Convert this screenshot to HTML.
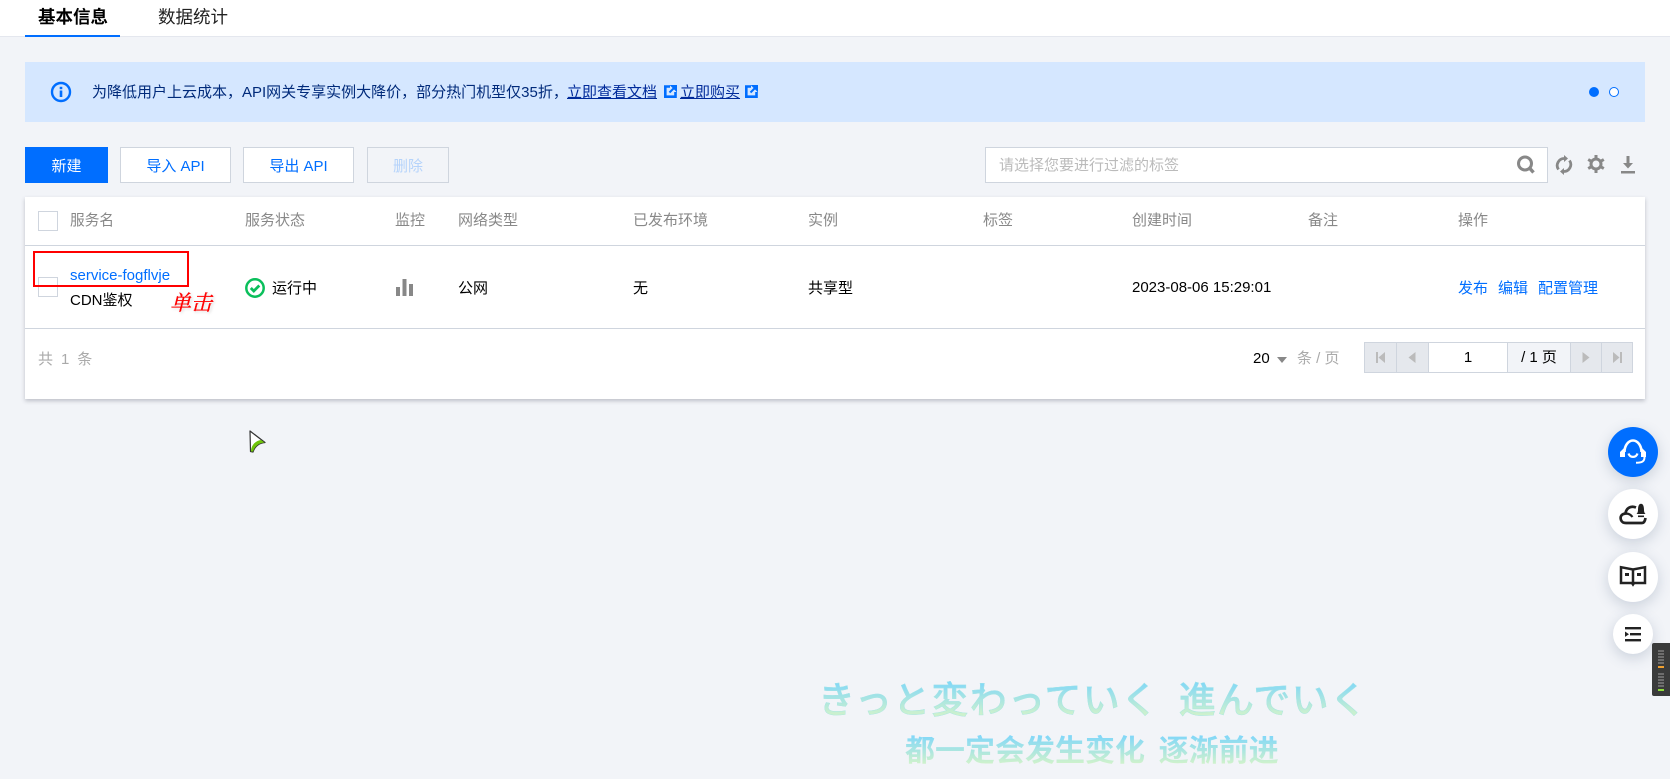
<!DOCTYPE html>
<html lang="zh-CN">
<head>
<meta charset="utf-8">
<title>API网关</title>
<style>
html,body{margin:0;padding:0}
body{width:1670px;height:779px;overflow:hidden;background:#f2f4f8;position:relative;font-family:"Liberation Sans","Noto Sans CJK SC",sans-serif;font-size:15px;color:#000}
.a{position:absolute}
.t{position:absolute;white-space:nowrap;line-height:20px;height:20px}
.g{color:#888}
.b{color:#006eff}
.btn{position:absolute;top:147px;height:36px;box-sizing:border-box;border:1px solid #cfd5de;background:#fff;color:#006eff;text-align:center;line-height:37px}
.cb{position:absolute;left:38px;width:20px;height:20px;box-sizing:border-box;border:1px solid #cfd5de;background:#fff}
.pg{position:absolute;top:342px;height:31px;box-sizing:border-box;border:1px solid #cfd5de;background:#e5e8ed}
.fab{position:absolute;border-radius:50%;background:#fff;box-shadow:0 4px 14px rgba(60,80,120,.22)}
.fab svg{position:absolute;left:0;top:0}
.grad{position:absolute;white-space:nowrap;color:transparent;background:linear-gradient(#7bd5fc 15%,#cdf1cd 85%);-webkit-background-clip:text;background-clip:text}
svg{display:block}
</style>
</head>
<body>
<!-- top tabs -->
<div class="a" style="left:0;top:0;width:1670px;height:36px;background:#fff;border-bottom:1px solid #e4e7ee"></div>
<div class="t" style="left:38px;top:7px;font-size:17.5px;font-weight:700;color:#000">基本信息</div>
<div class="t" style="left:158px;top:7px;font-size:17.5px;color:#222">数据统计</div>
<div class="a" style="left:25px;top:35px;width:95px;height:2px;background:#006eff"></div>

<!-- banner -->
<div class="a" style="left:25px;top:62px;width:1620px;height:60px;background:#d5e7ff"></div>
<svg class="a" style="left:50px;top:81px" width="22" height="22" viewBox="0 0 22 22"><circle cx="11" cy="11" r="9" fill="none" stroke="#006eff" stroke-width="2.400"/><rect x="9.700" y="9.500" width="2.600" height="6.500" fill="#006eff"/><rect x="9.700" y="5.800" width="2.600" height="2.400" fill="#006eff"/></svg>
<div class="t" style="left:92px;top:83px;color:#002a7a">为降低用户上云成本，API网关专享实例大降价，部分热门机型仅35折，</div>
<div class="t" style="left:567px;top:83px;color:#002a9a;text-decoration:underline">立即查看文档</div>
<svg class="a" style="left:664px;top:85px" width="13" height="13" viewBox="0 0 13 13"><path d="M6 1.500H1.300v10.200h10.200V7" fill="none" stroke="#006eff" stroke-width="2.600"/><path d="M7 0h6v6zM10.500 2.500L5.500 7.500" fill="#006eff" stroke="#006eff" stroke-width="2"/></svg>
<div class="t" style="left:680px;top:83px;color:#002a9a;text-decoration:underline">立即购买</div>
<svg class="a" style="left:745px;top:85px" width="13" height="13" viewBox="0 0 13 13"><path d="M6 1.500H1.300v10.200h10.200V7" fill="none" stroke="#006eff" stroke-width="2.600"/><path d="M7 0h6v6zM10.500 2.500L5.500 7.500" fill="#006eff" stroke="#006eff" stroke-width="2"/></svg>
<div class="a" style="left:1589px;top:87px;width:10px;height:10px;border-radius:50%;background:#006eff"></div>
<div class="a" style="left:1609px;top:87px;width:10px;height:10px;border-radius:50%;background:#fff;border:1px solid #006eff;box-sizing:border-box"></div>

<!-- toolbar -->
<div class="btn" style="left:25px;width:83px;background:#006eff;border-color:#006eff;color:#fff">新建</div>
<div class="btn" style="left:120px;width:111px">导入 API</div>
<div class="btn" style="left:243px;width:111px">导出 API</div>
<div class="btn" style="left:367px;width:82px;background:#f2f4f8;color:#b5d3fb">删除</div>
<div class="a" style="left:985px;top:147px;width:563px;height:36px;box-sizing:border-box;border:1px solid #cfd5de;background:#fff"></div>
<div class="t" style="left:999px;top:156px;color:#bbb">请选择您要进行过滤的标签</div>
<svg class="a" style="left:1516px;top:155px" width="20" height="20" viewBox="0 0 20 20"><circle cx="9" cy="8.500" r="6.500" fill="none" stroke="#888" stroke-width="3"/><path d="M13.500 13L17.500 17.500" stroke="#888" stroke-width="3.400"/></svg>
<svg class="a" style="left:1555px;top:155px" width="18" height="20" viewBox="0 0 18 20"><path d="M3.500 14.500A7 7 0 0 1 9.500 3.500" fill="none" stroke="#888" stroke-width="2.800"/><path d="M14.500 5.500A7 7 0 0 1 8.500 16.500" fill="none" stroke="#888" stroke-width="2.800"/><path d="M9 0l4 3.500L9 7zM9 13l-4 3.500L9 20z" fill="#888"/></svg>
<svg class="a" style="left:1587px;top:155px" width="18" height="18" viewBox="0 0 18 18"><circle cx="9" cy="9" r="5" fill="none" stroke="#888" stroke-width="3"/><path d="M9 0v4M9 14v4M1.200 4.500l3.500 2M13.300 11.500l3.500 2M1.200 13.500l3.500-2M13.300 6.500l3.500-2" stroke="#888" stroke-width="3"/></svg>
<svg class="a" style="left:1620px;top:156px" width="16" height="18" viewBox="0 0 16 18"><path d="M6.500 0h3v7h3.500L8 12.500 3 7h3.500z" fill="#888"/><rect x="1" y="15" width="14" height="2.500" fill="#888"/></svg>

<!-- table card -->
<div class="a" style="left:25px;top:197px;width:1620px;height:202px;background:#fff;box-shadow:0 2px 4px rgba(54,58,80,.28)"></div>
<div class="a" style="left:25px;top:245px;width:1620px;height:1px;background:#cfd5de"></div>
<div class="a" style="left:25px;top:328px;width:1620px;height:1px;background:#cfd5de"></div>

<div class="cb" style="top:211px"></div>
<div class="t g" style="left:70px;top:211px;font-size:14.700px">服务名</div>
<div class="t g" style="left:245px;top:211px">服务状态</div>
<div class="t g" style="left:395px;top:211px">监控</div>
<div class="t g" style="left:458px;top:211px">网络类型</div>
<div class="t g" style="left:633px;top:211px">已发布环境</div>
<div class="t g" style="left:808px;top:211px">实例</div>
<div class="t g" style="left:983px;top:211px">标签</div>
<div class="t g" style="left:1132px;top:211px">创建时间</div>
<div class="t g" style="left:1308px;top:211px">备注</div>
<div class="t g" style="left:1458px;top:211px">操作</div>

<div class="cb" style="top:277px"></div>
<div class="t b" style="left:70px;top:266px">service-fogflvje</div>
<div class="t" style="left:70px;top:291px">CDN鉴权</div>
<div class="a" style="left:33px;top:251px;width:156px;height:36px;box-sizing:border-box;border:2px solid #f00"></div>
<div class="t" style="left:170px;top:291px;height:24px;line-height:24px;font-family:'Liberation Serif','Noto Serif CJK SC',serif;font-size:21px;font-style:italic;font-weight:400;color:#f00;-webkit-text-stroke:.35px #f00;text-shadow:0 0 3px #fff,0 0 3px #fff,1px 1px 3px #bbb">单击</div>
<svg class="a" style="left:245px;top:278px" width="20" height="20" viewBox="0 0 20 20"><circle cx="10" cy="10" r="8.700" fill="none" stroke="#0abf5b" stroke-width="2.500"/><path d="M5.800 10l3 3 5.500-5.500" fill="none" stroke="#0abf5b" stroke-width="2.800"/></svg>
<div class="t" style="left:272px;top:279px">运行中</div>
<svg class="a" style="left:396px;top:279px" width="17" height="17" viewBox="0 0 17 17"><rect x="0" y="8" width="4" height="9" fill="#888"/><rect x="6.500" y="0" width="4" height="17" fill="#888"/><rect x="13" y="5" width="4" height="12" fill="#888"/></svg>
<div class="t" style="left:458px;top:279px">公网</div>
<div class="t" style="left:633px;top:279px">无</div>
<div class="t" style="left:808px;top:279px">共享型</div>
<div class="t" style="left:1132px;top:278px">2023-08-06 15:29:01</div>
<div class="t b" style="left:1458px;top:279px">发布</div>
<div class="t b" style="left:1498px;top:279px">编辑</div>
<div class="t b" style="left:1538px;top:279px">配置管理</div>

<!-- footer -->
<div class="t" style="left:38px;top:350px;color:#aaa;word-spacing:3.800px">共 1 条</div>
<div class="t" style="left:1253px;top:349px">20</div>
<div class="a" style="left:1277px;top:357px;width:0;height:0;border-left:5px solid transparent;border-right:5px solid transparent;border-top:6px solid #888"></div>
<div class="t" style="left:1297px;top:349px;color:#aaa">条 / 页</div>
<div class="pg" style="left:1364px;width:33px"></div>
<svg class="a" style="left:1376px;top:352px" width="10" height="11" viewBox="0 0 10 11"><rect x="0" y="0" width="2" height="11" fill="#bbb"/><path d="M9 0v11L2.500 5.500z" fill="#bbb"/></svg>
<div class="pg" style="left:1396px;width:33px"></div>
<svg class="a" style="left:1408px;top:352px" width="8" height="11" viewBox="0 0 8 11"><path d="M7.500 0v11L.5 5.500z" fill="#bbb"/></svg>
<div class="pg" style="left:1428px;width:80px;background:#fff;text-align:center;line-height:30px;color:#000">1</div>
<div class="pg" style="left:1507px;width:64px;background:#f2f4f8;text-align:center;line-height:30px;color:#000">/ 1 页</div>
<div class="pg" style="left:1570px;width:32px"></div>
<svg class="a" style="left:1582px;top:352px" width="8" height="11" viewBox="0 0 8 11"><path d="M.5 0v11l7-5.500z" fill="#bbb"/></svg>
<div class="pg" style="left:1601px;width:32px"></div>
<svg class="a" style="left:1612px;top:352px" width="10" height="11" viewBox="0 0 10 11"><path d="M1 0v11l6.500-5.500z" fill="#bbb"/><rect x="8" y="0" width="2" height="11" fill="#bbb"/></svg>

<!-- cursor -->
<svg class="a" style="left:248px;top:430px" width="19" height="23" viewBox="0 0 19 23"><path d="M2 1L17 12.500C11 13 7 16 5 22L2.500 21.500z" fill="#fff" stroke="#333" stroke-width="1.200" stroke-linejoin="round"/><path d="M3 21.500C3 15 8 10.500 13 10L16.500 12.500C11 13 7 16 5 21.500z" fill="#6fc40a"/></svg>

<!-- floating buttons -->
<div class="fab" style="left:1608px;top:427px;width:50px;height:50px;background:#006eff">
<svg width="50" height="50" viewBox="0 0 50 50"><path d="M16.500 25A8.500 11.500 0 0 1 33.500 25" fill="none" stroke="#fff" stroke-width="2.600"/><path d="M12 30v-5l5-5v10zM38 30v-5l-5-5v10z" fill="#fff"/><path d="M20.500 26.500c1.500 4.500 7.500 4.500 9 0" fill="none" stroke="#fff" stroke-width="2.200"/><path d="M36.500 30c0 4.500-2.500 5.800-8.500 5.800" fill="none" stroke="#fff" stroke-width="2"/></svg></div>
<div class="fab" style="left:1608px;top:489px;width:50px;height:50px">
<svg width="50" height="50" viewBox="0 0 50 50"><path d="M28 18.500C22 16 18 20 17.500 24.500 13 25 12 28 13 31 14 33.500 15.500 34 18 34H34C36 34 37 32 37.500 29" fill="none" stroke="#222" stroke-width="2.700"/><path d="M18 24.500c3 0 5 1.500 6.500 3.500" fill="none" stroke="#222" stroke-width="2.200"/><path d="M28.500 25c1.200-1.200 1.500-2.500 1.500-4 0-4 1-6.200 3-6.200s3 2.200 3 6.200c0 1.500.3 2.800 1.500 4z" fill="#222"/><rect x="30" y="26.500" width="6" height="1.600" fill="#222"/></svg></div>
<div class="fab" style="left:1608px;top:552px;width:50px;height:50px">
<svg width="50" height="50" viewBox="0 0 50 50"><path d="M13 15.200L25 17.500 37 15.200V31H13z" fill="none" stroke="#222" stroke-width="2.500"/><path d="M25 17v15" stroke="#222" stroke-width="2.500"/><rect x="17" y="21" width="4" height="3" fill="#222"/><rect x="29" y="21" width="4" height="3" fill="#222"/><path d="M22.500 31h5L25 34.800z" fill="#222"/></svg></div>
<div class="fab" style="left:1613px;top:614px;width:40px;height:40px">
<svg width="40" height="40" viewBox="0 0 40 40"><rect x="12" y="13" width="16" height="2.400" fill="#222"/><rect x="17" y="19" width="11" height="2.400" fill="#222"/><rect x="12" y="25" width="16" height="2.400" fill="#222"/><path d="M12 17.500l4 2.700-4 2.700z" fill="#222"/></svg></div>

<!-- side widget -->
<div class="a" style="left:1652px;top:643px;width:18px;height:53px;background:#3a3b3b;border-radius:2px 0 0 2px"></div>
<div class="a" style="left:1658px;top:650px;width:6px;height:14px;background:repeating-linear-gradient(#6d6d6d 0 2px,#3a3b3b 2px 3px)"></div>
<div class="a" style="left:1658px;top:665.500px;width:6px;height:2px;background:#f0a030"></div>
<div class="a" style="left:1658px;top:673px;width:6px;height:14px;background:repeating-linear-gradient(#6d6d6d 0 2px,#3a3b3b 2px 3px)"></div>
<div class="a" style="left:1658px;top:688.500px;width:6px;height:2px;background:#8fdc3c"></div>

<!-- subtitle overlay -->
<div class="grad" style="left:818px;top:672px;font-size:37px;line-height:50px;height:50px;letter-spacing:1.300px;font-family:'Noto Sans CJK JP',sans-serif;font-weight:500;-webkit-text-stroke:.4px rgba(165,228,228,.9)">きっと変わっていく&nbsp;&nbsp;進んでいく</div>
<div class="grad" style="left:905px;top:727px;font-size:30px;line-height:42px;height:42px;font-family:'Noto Sans CJK SC',sans-serif;font-weight:700">都一定会发生变化&nbsp;&nbsp;逐渐前进</div>
</body>
</html>
